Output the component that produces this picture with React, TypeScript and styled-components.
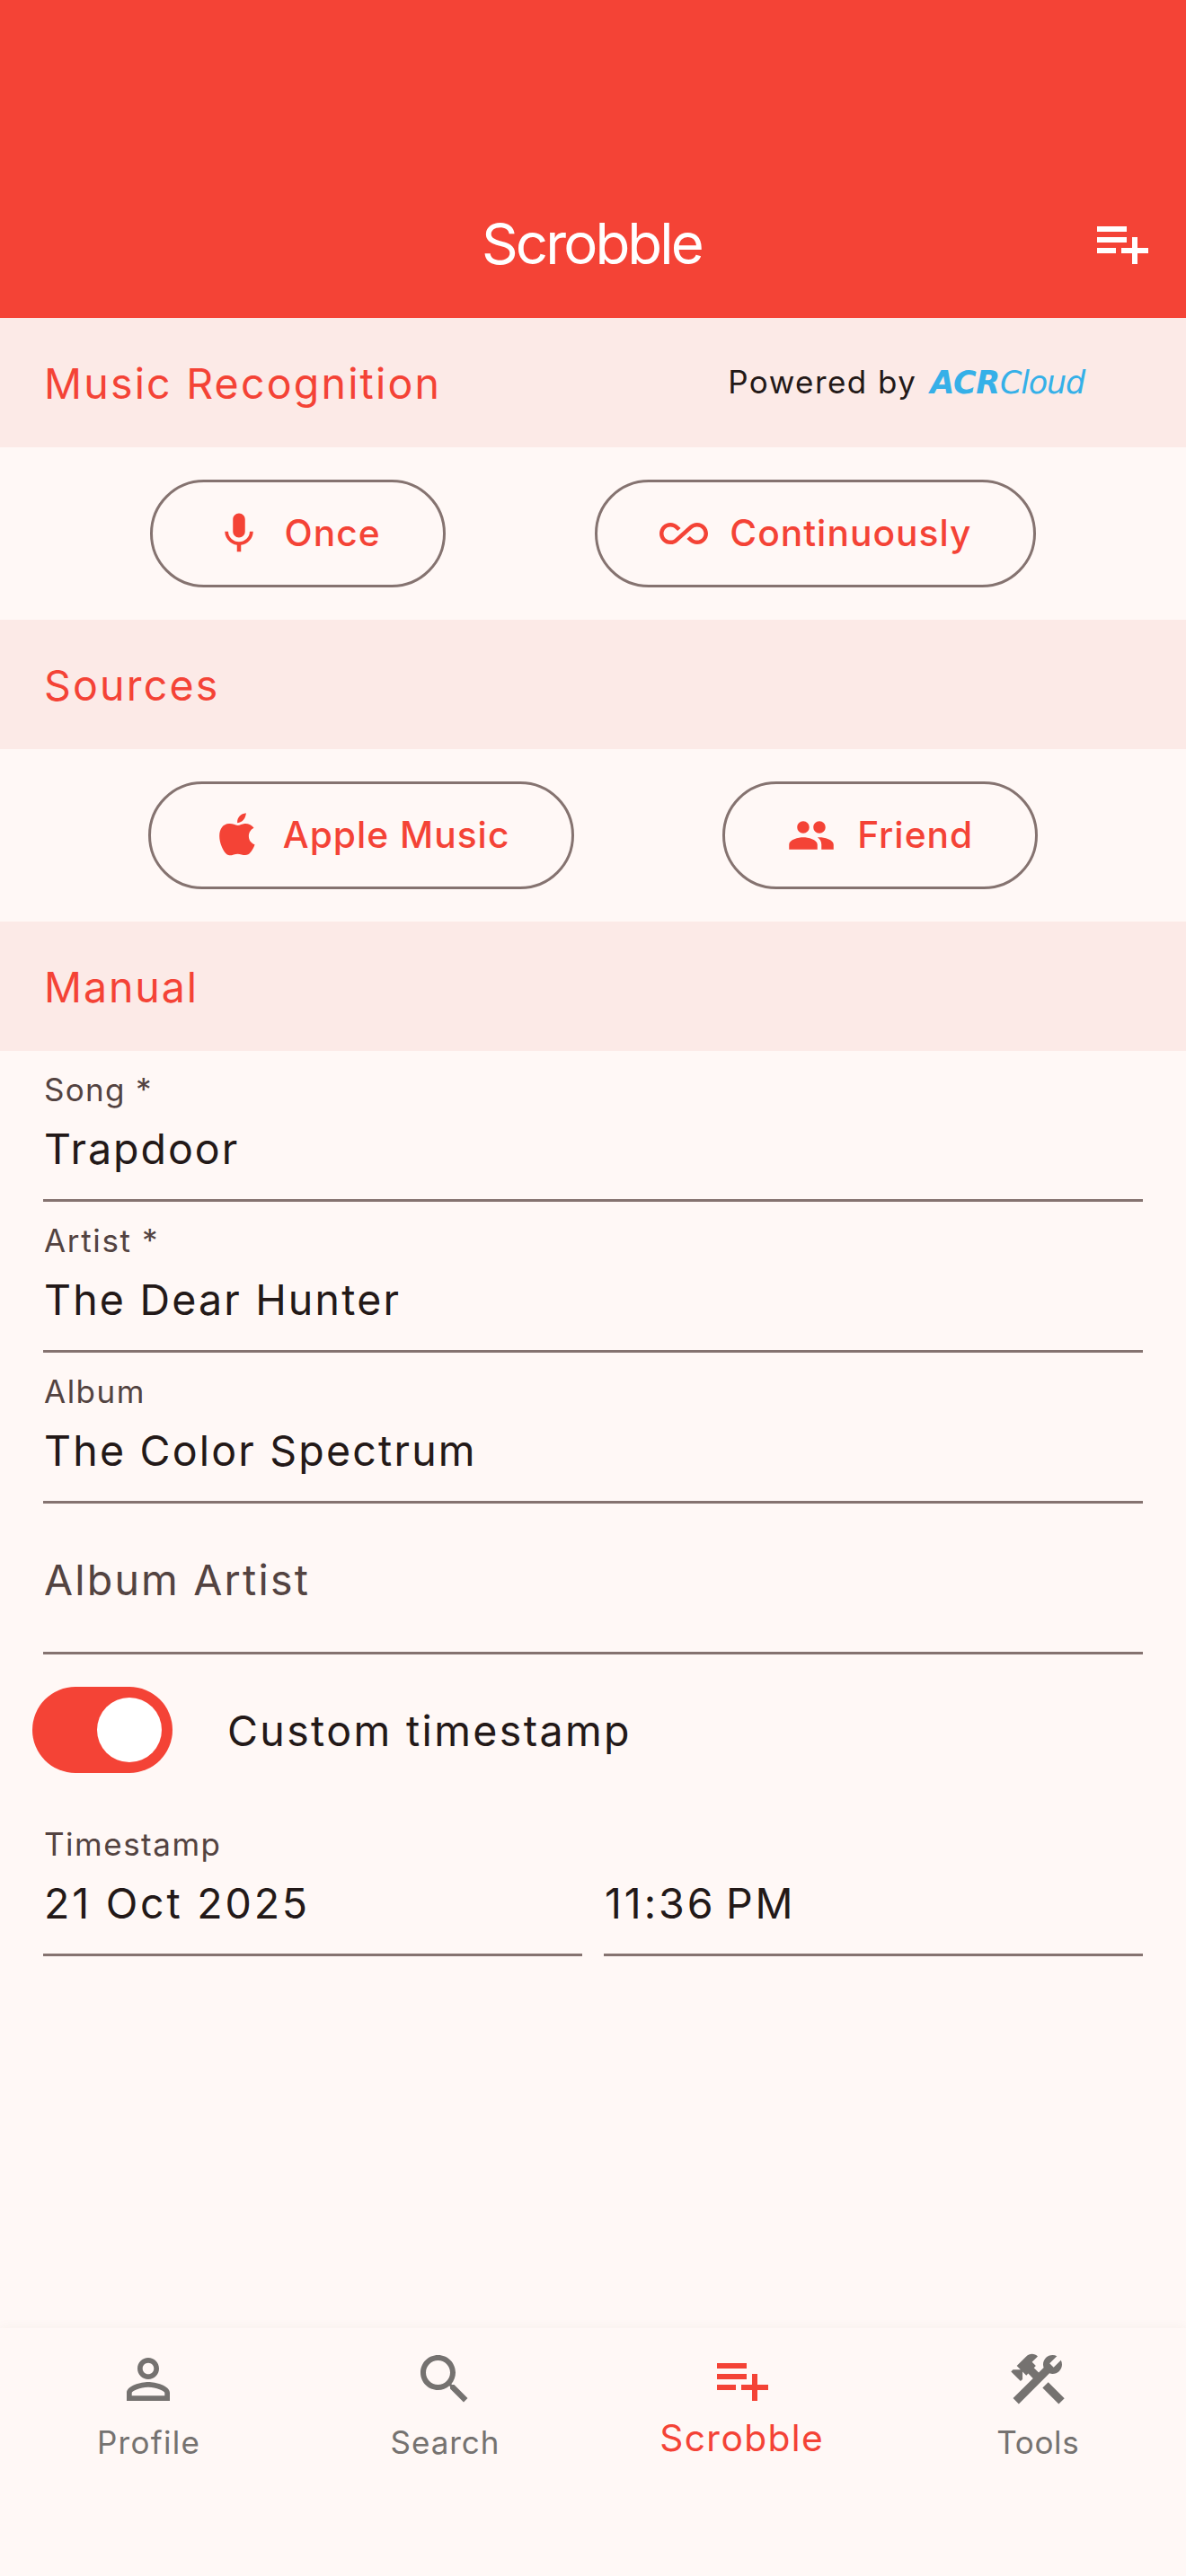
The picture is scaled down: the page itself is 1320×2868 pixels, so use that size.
import React from "react";
import styled, { createGlobalStyle } from "styled-components";

const color = {
  primary: "#f44336",
  surface: "#fff8f6",
  section: "#fceae7",
  outline: "#857370",
  text: "#231918",
  label: "#534341",
  muted: "#757270",
  logo: "#35b0e8",
};

const GlobalStyle = createGlobalStyle`
  *, *::before, *::after { box-sizing: border-box; }
  body { margin: 0; background: ${color.surface}; }
`;

const Screen = styled.div`
  display: flex;
  flex-direction: column;
  width: 1320px;
  height: 2868px;
  overflow: hidden;
  background: ${color.surface};
  color: ${color.text};
  font-family: Inter, "Liberation Sans", sans-serif;
  white-space: nowrap;
`;

const Header = styled.header`
  display: grid;
  grid-template-columns: 1fr auto 1fr;
  align-items: center;
  height: 354px;
  padding: 186px 36px 0;
  background: ${color.primary};
  color: #fff;
`;

const Title = styled.h1`
  grid-column: 2;
  margin: 0;
  padding: 1px 3px 0 0;
  font-size: 63.5px;
  font-weight: 400;
  line-height: 80px;
  letter-spacing: -2.9px;
`;

const HeaderAction = styled.button`
  display: flex;
  justify-self: end;
  padding: 0;
  border: 0;
  background: none;
  color: inherit;
`;

const Icon = styled.svg<{ $size: number }>`
  display: block;
  flex: none;
  width: ${(p) => p.$size}px;
  height: ${(p) => p.$size}px;
  fill: currentColor;
`;

const Content = styled.main`
  flex: 1;
`;

const SectionBar = styled.div`
  display: flex;
  align-items: center;
  justify-content: space-between;
  height: 144px;
  padding: 0 113px 0 49px;
  background: ${color.section};
`;

const SectionTitle = styled.h2<{ $tracking?: number }>`
  margin: 0;
  padding-top: 2px;
  color: ${color.primary};
  font-size: 46.5px;
  font-weight: 400;
  line-height: 60px;
  letter-spacing: ${(p) => p.$tracking ?? 2.2}px;
`;

const PoweredBy = styled.div`
  display: flex;
  align-items: baseline;
  gap: 15px;
  margin-top: -1px;
  font-size: 35px;
  line-height: 44px;
  letter-spacing: 1.44px;
`;

const Logo = styled.span`
  color: ${color.logo};
  font-family: "DejaVu Sans", Verdana, sans-serif;
  font-style: italic;
  letter-spacing: -1.2px;
`;

const LogoStrong = styled.b`
  letter-spacing: -0.3px;
`;

const ButtonRow = styled.div`
  display: flex;
  align-items: center;
  justify-content: space-evenly;
  height: 192px;
`;

const PillButton = styled.button`
  display: flex;
  align-items: center;
  gap: 24px;
  height: 120px;
  padding: 0 69px;
  border: 3px solid ${color.outline};
  border-radius: 60px;
  background: transparent;
  color: ${color.primary};
  font-family: inherit;
  font-size: 40.7px;
  font-weight: 500;
  line-height: 54px;
  letter-spacing: 1.02px;
`;

const Fields = styled.div`
  display: flex;
  flex-direction: column;
  padding: 0 48px;
`;

const FieldBox = styled.div<{ $empty?: boolean }>`
  display: flex;
  flex: 1 0 auto;
  flex-direction: column;
  height: 168px;
  padding: ${(p) => (p.$empty ? 55 : 22)}px 0 0 1px;
  border-bottom: 3px solid ${color.outline};
`;

const FieldLabel = styled.span<{ $tracking: number }>`
  height: 42px;
  margin-bottom: 15px;
  color: ${color.label};
  font-size: 35px;
  line-height: 42px;
  letter-spacing: ${(p) => p.$tracking}px;
`;

const FieldValue = styled.span<{ $tracking: number; $placeholder?: boolean }>`
  color: ${(p) => (p.$placeholder ? color.label : color.text)};
  font-size: 46.5px;
  line-height: 60px;
  letter-spacing: ${(p) => p.$tracking}px;
`;

const SwitchRow = styled.label`
  display: flex;
  align-items: center;
  gap: 61px;
  height: 168px;
  margin-left: -12px;
`;

const SwitchTrack = styled.span`
  display: flex;
  align-items: center;
  justify-content: flex-end;
  width: 156px;
  height: 96px;
  padding: 12px;
  border-radius: 48px;
  background: ${color.primary};
`;

const SwitchThumb = styled.span`
  width: 72px;
  height: 72px;
  border-radius: 50%;
  background: #fff;
`;

const SwitchLabel = styled.span`
  padding-top: 2px;
  font-size: 46.5px;
  line-height: 60px;
  letter-spacing: 2.36px;
`;

const FieldPair = styled.div`
  display: grid;
  grid-template-columns: 1fr 1fr;
  gap: 24px;
`;

const NavBar = styled.nav`
  display: grid;
  grid-template-columns: repeat(4, 1fr);
  height: 276px;
  padding-top: 21px;
  background: ${color.surface};
  box-shadow: 0 -1px 12px rgba(70, 80, 50, 0.045);
`;

const NavItem = styled.a<{ $active?: boolean }>`
  display: flex;
  flex-direction: column;
  align-items: center;
  gap: ${(p) => (p.$active ? 6 : 10)}px;
  color: ${(p) => (p.$active ? color.primary : color.muted)};
  font-size: ${(p) => (p.$active ? 40.7 : 35)}px;
  line-height: 48px;
`;

const NavLabel = styled.span<{ $tracking: number }>`
  padding-left: ${(p) => p.$tracking}px;
  letter-spacing: ${(p) => p.$tracking}px;
`;

const paths = {
  playlistAdd:
    "M14 10H3v2h11v-2zm0-4H3v2h11V6zm4 8v-4h-2v4h-4v2h4v4h2v-4h4v-2h-4zM3 16h7v-2H3v2z",
  mic: "M12 14c1.66 0 2.99-1.34 2.99-3L15 5c0-1.66-1.34-3-3-3S9 3.34 9 5v6c0 1.66 1.34 3 3 3zm5.3-3c0 3-2.54 5.1-5.3 5.1S6.7 14 6.7 11H5c0 3.41 2.72 6.23 6 6.72V21h2v-3.28c3.28-.48 6-3.3 6-6.72h-1.7z",
  infinity:
    "M18.6 6.62c-1.44 0-2.8.56-3.77 1.53L12 10.66 10.48 12h.01L7.8 14.39c-.64.64-1.49.99-2.4.99-1.87 0-3.39-1.51-3.39-3.38S3.53 8.62 5.4 8.62c.91 0 1.76.35 2.44 1.03l1.13 1 1.51-1.34L9.22 8.2C8.2 7.18 6.84 6.62 5.4 6.62 2.42 6.62 0 9.04 0 12s2.42 5.38 5.4 5.38c1.44 0 2.8-.56 3.77-1.53l2.83-2.5.01.01L13.52 12h-.01l2.69-2.39c.64-.64 1.49-.99 2.4-.99 1.87 0 3.39 1.51 3.39 3.38s-1.52 3.38-3.39 3.38c-.9 0-1.76-.35-2.44-1.03l-1.14-1.01-1.51 1.34 1.27 1.12c1.02 1.01 2.37 1.57 3.82 1.57 2.98 0 5.4-2.41 5.4-5.38s-2.42-5.37-5.4-5.37z",
  people:
    "M16 11c1.66 0 2.99-1.34 2.99-3S17.66 5 16 5c-1.66 0-3 1.34-3 3s1.34 3 3 3zm-8 0c1.66 0 2.99-1.34 2.99-3S9.66 5 8 5C6.34 5 5 6.34 5 8s1.34 3 3 3zm0 2c-2.33 0-7 1.17-7 3.5V19h14v-2.5c0-2.33-4.67-3.5-7-3.5zm8 0c-.29 0-.62.02-.97.05 1.16.84 1.97 1.97 1.97 3.45V19h6v-2.5c0-2.33-4.67-3.5-7-3.5z",
  person:
    "M12 5.9c1.16 0 2.1.94 2.1 2.1s-.94 2.1-2.1 2.1S9.9 9.16 9.9 8s.94-2.1 2.1-2.1m0 9c2.97 0 6.1 1.46 6.1 2.1v1.1H5.9V17c0-.64 3.13-2.1 6.1-2.1M12 4C9.79 4 8 5.79 8 8s1.79 4 4 4 4-1.79 4-4-1.79-4-4-4zm0 9c-2.67 0-8 1.34-8 4v3h16v-3c0-2.66-5.33-4-8-4z",
  search:
    "M15.5 14h-.79l-.28-.27C15.41 12.59 16 11.11 16 9.5 16 5.91 13.09 3 9.5 3S3 5.91 3 9.5 5.91 16 9.5 16c1.61 0 3.09-.59 4.23-1.57l.27.28v.79l5 4.99L20.49 19l-4.99-5zm-6 0C7.01 14 5 11.99 5 9.5S7.01 5 9.5 5 14 7.01 14 9.5 11.99 14 9.5 14z",
  tools:
    "M13.783 15.172l2.121-2.121 5.996 5.996-2.121 2.121zM17.5 10c1.93 0 3.5-1.57 3.5-3.5 0-.58-.16-1.12-.41-1.6l-2.7 2.7-1.49-1.49 2.7-2.7c-.48-.25-1.02-.41-1.6-.41C15.57 3 14 4.57 14 6.5c0 .41.08.8.21 1.16l-1.85 1.85-1.78-1.78.71-.71-1.41-1.41L12 3.49c-1.17-1.17-3.07-1.17-4.24 0L4.22 7.03l1.41 1.41H2.81l-.71.71 3.54 3.54.71-.71V9.15l1.41 1.41.71-.71 1.78 1.78-7.41 7.41 2.12 2.12L16.34 9.79c.36.13.75.21 1.16.21z",
  apple:
    "M133 87C124 85 115 80 104 81C84 82 72 98 72 122C72 146 84 172 97 184C107 192 121 182 133 182C145 182 156 190 168 184C178 178 186 164 190 151C178 146 170 136 170 122C170 110 177 100 187 95C180 85 168 80 156 81C147 82 141 87 133 87ZM132 79C130 63 142 48 161 46C160 62 150 77 132 79Z",
};

type IconName = keyof typeof paths;

function Glyph({ name, size }: { name: IconName; size: number }) {
  return (
    <Icon
      $size={size}
      viewBox={name === "apple" ? "50.4 39 162 162" : "0 0 24 24"}
      aria-hidden="true"
    >
      <path d={paths[name]} />
    </Icon>
  );
}

function ActionButton({ icon, label }: { icon: IconName; label: string }) {
  return (
    <PillButton type="button">
      <Glyph name={icon} size={54} />
      {label}
    </PillButton>
  );
}

interface FieldProps {
  label?: string;
  labelTracking?: number;
  value?: string;
  tracking?: number;
}

function Field({ label = "", labelTracking = 1.5, value, tracking = 2.2 }: FieldProps) {
  if (value === undefined) {
    return (
      <FieldBox $empty>
        <FieldValue $tracking={tracking} $placeholder>
          {label}
        </FieldValue>
      </FieldBox>
    );
  }
  return (
    <FieldBox>
      <FieldLabel $tracking={labelTracking}>{label}</FieldLabel>
      <FieldValue $tracking={tracking}>{value}</FieldValue>
    </FieldBox>
  );
}

const tabs: { icon: IconName; label: string; tracking: number; active?: boolean }[] = [
  { icon: "person", label: "Profile", tracking: 1.3 },
  { icon: "search", label: "Search", tracking: 0.95 },
  { icon: "playlistAdd", label: "Scrobble", tracking: 1.4, active: true },
  { icon: "tools", label: "Tools", tracking: 0.7 },
];

export default function App() {
  return (
    <Screen>
      <GlobalStyle />
      <Header>
        <Title>Scrobble</Title>
        <HeaderAction type="button" aria-label="Add to playlist">
          <Glyph name="playlistAdd" size={72} />
        </HeaderAction>
      </Header>

      <Content>
        <SectionBar>
          <SectionTitle>Music Recognition</SectionTitle>
          <PoweredBy>
            <span>Powered by</span>
            <Logo>
              <LogoStrong>ACR</LogoStrong>Cloud
            </Logo>
          </PoweredBy>
        </SectionBar>
        <ButtonRow>
          <ActionButton icon="mic" label="Once" />
          <ActionButton icon="infinity" label="Continuously" />
        </ButtonRow>

        <SectionBar>
          <SectionTitle>Sources</SectionTitle>
        </SectionBar>
        <ButtonRow>
          <ActionButton icon="apple" label="Apple Music" />
          <ActionButton icon="people" label="Friend" />
        </ButtonRow>

        <SectionBar>
          <SectionTitle $tracking={1.9}>Manual</SectionTitle>
        </SectionBar>
        <Fields>
          <Field label="Song *" labelTracking={1.3} value="Trapdoor" tracking={2} />
          <Field label="Artist *" labelTracking={1.65} value="The Dear Hunter" tracking={2.18} />
          <Field label="Album" value="The Color Spectrum" />
          <Field label="Album Artist" />
          <SwitchRow>
            <SwitchTrack>
              <SwitchThumb />
            </SwitchTrack>
            <SwitchLabel>Custom timestamp</SwitchLabel>
          </SwitchRow>
          <FieldPair>
            <Field label="Timestamp" value="21 Oct 2025" tracking={2.8} />
            <Field value={"11:36\u202fPM"} tracking={2.95} />
          </FieldPair>
        </Fields>
      </Content>

      <NavBar>
        {tabs.map((tab) => (
          <NavItem key={tab.label} $active={tab.active}>
            <Glyph name={tab.icon} size={72} />
            <NavLabel $tracking={tab.tracking}>{tab.label}</NavLabel>
          </NavItem>
        ))}
      </NavBar>
    </Screen>
  );
}
